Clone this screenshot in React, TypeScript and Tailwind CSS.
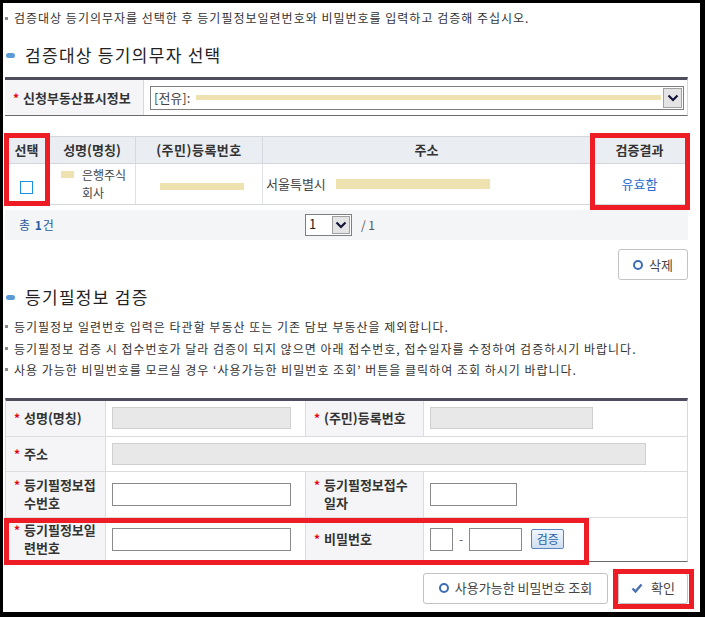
import React from 'react';

// 등기필정보 검증 화면
const Star = () => (
  <span className="w-[10px] shrink-0 text-[12px] leading-[18px] font-bold text-[#e60012]">*</span>
);

const Chevron = () => (
  <svg width="12" height="8" viewBox="0 0 12 8">
    <polyline points="1.5,1.5 6,6 10.5,1.5" fill="none" stroke="#14143a" strokeWidth="2.2" />
  </svg>
);

const Ring = () => (
  <span className="inline-block w-[10px] h-[10px] rounded-full border-[2.5px] border-[#3d6cb4] bg-white" />
);

const Bullet = ({ children }: { children: React.ReactNode }) => (
  <div className="flex items-center gap-[6px] leading-[21.5px] tracking-[1px]">
    <span className="w-[3px] h-[3px] bg-[#8a8a8a] shrink-0" />
    <span className="whitespace-nowrap">{children}</span>
  </div>
);

const Heading = ({ children }: { children: React.ReactNode }) => (
  <div className="flex items-center gap-[10px] pl-[1px] h-[24px] text-[17px] tracking-[1.3px] text-[#222]">
    <span className="w-[9px] h-[5px] rounded-full bg-[#5c9bd6]" />
    <span>{children}</span>
  </div>
);

const Label = ({ children }: { children: React.ReactNode }) => (
  <div className="flex items-center pl-[8px] bg-[#f5f5f7] text-[13px] font-bold text-[#333] leading-[18px]">
    <div className="flex items-start">
      <Star />
      <span className="whitespace-nowrap">{children}</span>
    </div>
  </div>
);

export default function App() {
  return (
    <div className="w-[705px] h-[617px] bg-black pt-[3px] pl-[3px] font-['Noto_Sans_CJK_KR','Noto_Sans',sans-serif] text-[12px] text-[#333]">
      <div className="relative w-[697px] h-[609px] bg-white pt-[6px] pl-[2px]">
        <div className="w-[683px]">
          <div className="flex items-center gap-[6px] leading-[18px] tracking-[1px]">
            <span className="w-[3px] h-[3px] bg-[#8a8a8a]" />
            <span className="whitespace-nowrap">검증대상 등기의무자를 선택한 후 등기필정보일련번호와 비밀번호를 입력하고 검증해 주십시오.</span>
          </div>

          <div className="mt-[16px]">
            <Heading>검증대상 등기의무자 선택</Heading>
          </div>

          {/* 신청부동산표시정보 */}
          <div className="mt-[10px] border-t-[3px] border-t-[#4d4d5d] border-b border-b-[#6a6a6a] border-r border-r-[#d8d8d8] grid grid-cols-[138px_545px] h-[39px]">
            <Label>신청부동산표시정보</Label>
            <div className="flex items-center pl-[6px] border-l border-[#d8d8d8]">
              <div className="flex items-center w-[534px] h-[24px] border border-[#7f7f7f] bg-white">
                <span className="pl-[3px] text-[13px] text-[#444]">[전유]:</span>
                <span className="ml-[6px] w-[465px] h-[5px] bg-[#eee2b0]" />
                <span className="ml-auto mr-[1px] w-[19px] h-[20px] flex items-center justify-center bg-[#e4e4e4] border border-[#a0a0a0]">
                  <Chevron />
                </span>
              </div>
            </div>
          </div>

          {/* 검증대상 목록 */}
          <div className="mt-[20px] border-t border-[#d3d7dc]">
            <div className="grid grid-cols-[43px_87px_127px_328px_98px] h-[27px] bg-[#eaeef2] border-b border-[#d3d7dc] text-[13px] font-bold text-[#333]">
              <div className="flex items-center justify-center">선택</div>
              <div className="flex items-center justify-center border-l border-[#d6dadf]">성명(명칭)</div>
              <div className="flex items-center justify-center border-l border-[#d6dadf] tracking-[0.5px]">(주민)등록번호</div>
              <div className="flex items-center justify-center border-l border-[#d6dadf]">주소</div>
              <div className="flex items-center justify-center border-l border-[#d6dadf]">검증결과</div>
            </div>
            <div className="grid grid-cols-[43px_87px_127px_328px_98px] h-[41px] border-b border-[#d3d7dc] text-[12px]">
              <div className="flex items-center justify-center">
                <span className="w-[13px] h-[13px] border-[1.5px] border-[#1c8fe0] bg-white mt-[6px]" />
              </div>
              <div className="flex items-center pl-[12px] border-l border-[#dde0e4]">
                <span className="w-[13px] h-[7px] bg-[#eee2b0] self-start mt-[7px]" />
                <span className="ml-[8px] leading-[18px] text-[#444]">은행주식<br />회사</span>
              </div>
              <div className="flex items-center justify-center border-l border-[#dde0e4]">
                <span className="w-[84px] h-[7px] bg-[#eee2b0] ml-[5px] mt-[4px]" />
              </div>
              <div className="flex items-center pl-[3px] border-l border-[#dde0e4] text-[13px] text-[#444]">
                <span>서울특별시</span>
                <span className="ml-[10px] w-[154px] h-[10px] bg-[#eee2b0]" />
              </div>
              <div className="flex items-center justify-center border-l border-[#dde0e4] text-[13px] text-[#2b6cd0]">유효함</div>
            </div>
          </div>

          {/* 페이징 */}
          <div className="mt-[5px] h-[30px] bg-[#f4f5f7] flex items-center pl-[14px]">
            <span className="text-[#2c5aa0] text-[12px] tracking-[1px]">총 <b>1</b>건</span>
            <div className="ml-[250px] flex items-center">
              <div className="flex items-center w-[47px] h-[22px] border border-[#7f7f7f] bg-white">
                <span className="pl-[3px] text-[13px] leading-none text-[#222] self-start mt-[2px]">1</span>
                <span className="ml-auto mr-[1px] w-[18px] h-[18px] flex items-center justify-center bg-[#e4e4e4] border border-[#a0a0a0]">
                  <Chevron />
                </span>
              </div>
              <span className="ml-[9px] text-[#555]">/ 1</span>
            </div>
          </div>

          <div className="mt-[9px] flex justify-end">
            <button className="w-[70px] h-[31px] flex items-center justify-center gap-[6px] rounded-[3px] border border-[#c3c3c3] bg-white text-[13px] text-[#444]">
              <Ring />
              삭제
            </button>
          </div>

          <div className="mt-[5px]">
            <Heading>등기필정보 검증</Heading>
          </div>

          <div className="mt-[7px]">
            <Bullet>등기필정보 일련번호 입력은 타관할 부동산 또는 기존 담보 부동산을 제외합니다.</Bullet>
            <Bullet>등기필정보 검증 시 접수번호가 달라 검증이 되지 않으면 아래 접수번호, 접수일자를 수정하여 검증하시기 바랍니다.</Bullet>
            <Bullet>사용 가능한 비밀번호를 모르실 경우 ‘사용가능한 비밀번호 조회’ 버튼을 클릭하여 조회 하시기 바랍니다.</Bullet>
          </div>

          {/* 입력 폼 */}
          <div className="mt-[17px] border-t-[3px] border-t-[#4d4d5d] border-b border-b-[#6a6a6a] border-x border-x-[#d8d8d8]">
            <div className="grid grid-cols-[99px_200px_118px_264px] h-[36px] border-b border-[#dcdcdc]">
              <Label>성명(명칭)</Label>
              <div className="flex items-center pl-[6px] border-l border-[#dcdcdc]">
                <span className="w-[179px] h-[22px] bg-[#e8e8e8] border border-[#cfcfcf]" />
              </div>
              <div className="border-l border-[#dcdcdc] grid"><Label>(주민)등록번호</Label></div>
              <div className="flex items-center pl-[6px] border-l border-[#dcdcdc]">
                <span className="w-[163px] h-[22px] bg-[#e8e8e8] border border-[#cfcfcf]" />
              </div>
            </div>
            <div className="grid grid-cols-[99px_582px] h-[35px] border-b border-[#dcdcdc]">
              <Label>주소</Label>
              <div className="flex items-center pl-[6px] border-l border-[#dcdcdc]">
                <span className="w-[534px] h-[22px] bg-[#e8e8e8] border border-[#cfcfcf]" />
              </div>
            </div>
            <div className="grid grid-cols-[99px_200px_118px_264px] h-[46px] border-b border-[#dcdcdc]">
              <Label>등기필정보접<br />수번호</Label>
              <div className="flex items-center pl-[6px] border-l border-[#dcdcdc]">
                <span className="w-[179px] h-[23px] bg-white border border-[#8a8a8a]" />
              </div>
              <div className="border-l border-[#dcdcdc] grid"><Label>등기필정보접수<br />일자</Label></div>
              <div className="flex items-center pl-[6px] border-l border-[#dcdcdc]">
                <span className="w-[87px] h-[23px] bg-white border border-[#8a8a8a]" />
              </div>
            </div>
            <div className="grid grid-cols-[99px_200px_118px_264px] h-[43px]">
              <Label>등기필정보일<br />련번호</Label>
              <div className="flex items-center pl-[6px] border-l border-[#dcdcdc]">
                <span className="w-[179px] h-[23px] bg-white border border-[#8a8a8a]" />
              </div>
              <div className="border-l border-[#dcdcdc] grid"><Label>비밀번호</Label></div>
              <div className="flex items-center pl-[6px] border-l border-[#dcdcdc]">
                <span className="w-[23px] h-[23px] bg-white border border-[#8a8a8a]" />
                <span className="mx-[6px] text-[#555]">-</span>
                <span className="w-[53px] h-[23px] bg-white border border-[#8a8a8a]" />
                <button className="ml-[9px] w-[33px] h-[20px] rounded-[2px] border border-[#5a84c0] bg-gradient-to-b from-[#f0f6fc] to-[#cfe0f2] text-[12px] leading-none text-[#2a5ea8]">검증</button>
              </div>
            </div>
          </div>

          <div className="mt-[11px] flex justify-end gap-[10px]">
            <button className="w-[185px] h-[31px] flex items-center justify-center gap-[6px] rounded-[3px] border border-[#c3c3c3] bg-white text-[13px] text-[#444]">
              <Ring />
              사용가능한 비밀번호 조회
            </button>
            <button className="w-[70px] h-[31px] flex items-center justify-center gap-[8px] rounded-[3px] border border-[#c3c3c3] bg-white text-[13px] text-[#444]">
              <svg width="12" height="10" viewBox="0 0 12 10">
                <polyline points="1.5,5.5 4.5,8.5 10.5,1.5" fill="none" stroke="#4a70b0" strokeWidth="2.4" />
              </svg>
              확인
            </button>
          </div>
        </div>

        {/* 강조 표시 */}
        <div className="absolute left-[1px] top-[130px] w-[46px] h-[73px] border-[5px] border-[#ee1c25]" />
        <div className="absolute left-[587px] top-[130px] w-[100px] h-[77px] border-[5px] border-[#ee1c25]" />
        <div className="absolute left-[1px] top-[515px] w-[585px] h-[47px] border-[5px] border-[#ee1c25]" />
        <div className="absolute left-[610px] top-[566px] w-[81px] h-[40px] border-[5px] border-[#ee1c25]" />
      </div>
    </div>
  );
}
